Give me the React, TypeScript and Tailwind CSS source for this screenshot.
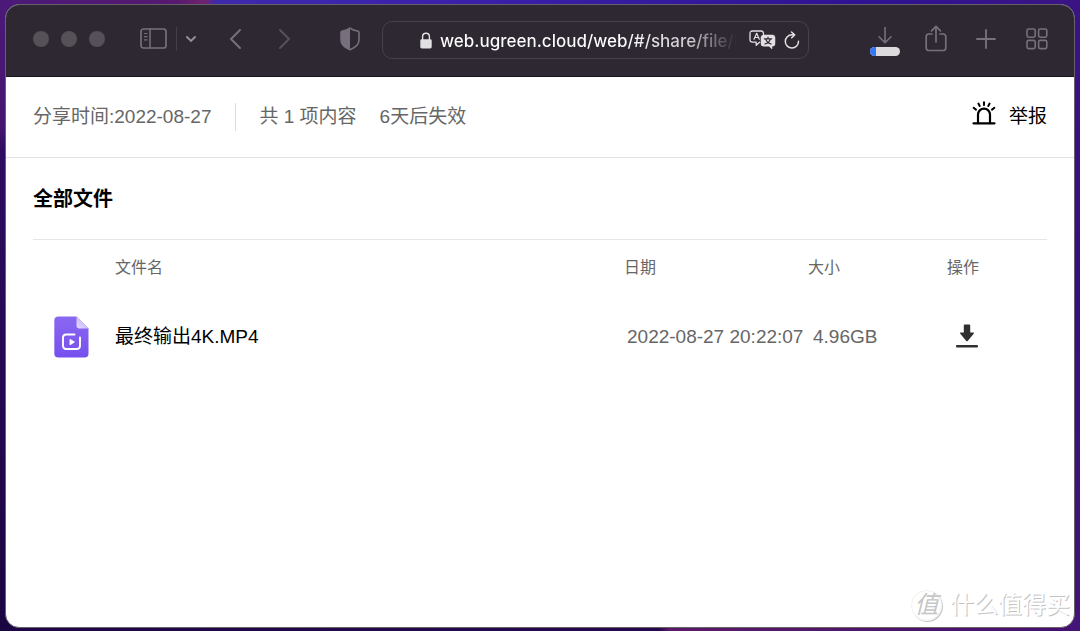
import React from 'react';

interface SharedFile {
  id: string;
  name: string;
  date: string;
  size: string;
}

const files: SharedFile[] = [{ id: '1', name: '最终输出4K.MP4', date: '2022-08-27 20:22:07', size: '4.96GB' }];

const SidebarIcon = () => (
  <svg className="w-7 h-[22px]" viewBox="0 0 28 22" fill="none" stroke="currentColor" strokeLinecap="round">
    <rect x="1" y="1" width="25" height="19" rx="2.5" strokeWidth="1.7" />
    <path d="M10 1v19" strokeWidth="1.5" />
    <path d="M4.5 5.5h2.5M4.5 8.7h2.5M4.5 11.9h2.5" strokeWidth="1.2" />
  </svg>
);

const ShieldIcon = () => (
  <svg className="w-5 h-6" viewBox="0 0 20 24">
    <path
      d="M10 1.2 Q13 3.4 18.2 4.3 Q19 4.5 19 5.4 V13 C19 17.5 15.5 20.5 10 22.8 C4.5 20.5 1 17.5 1 13 V5.4 Q1 4.5 1.8 4.3 Q7 3.4 10 1.2Z"
      fill="none"
      stroke="currentColor"
      strokeWidth="1.6"
    />
    <path d="M10 1.2 Q7 3.4 1.8 4.3 Q1 4.5 1 5.4 V13 C1 17.5 4.5 20.5 10 22.8Z" fill="currentColor" />
  </svg>
);

const LockIcon = () => (
  <svg className="w-3 h-[17px] shrink-0" viewBox="0 0 12 17">
    <path d="M2.6 8V4.6a3.4 3.4 0 0 1 6.8 0V8" fill="none" stroke="currentColor" strokeWidth="1.4" />
    <rect x="0.3" y="7.3" width="11.4" height="9.2" rx="1.4" fill="currentColor" />
  </svg>
);

const TranslateIcon = () => (
  <svg
    className="w-[27px] h-5"
    viewBox="0 0 27 20"
    fill="none"
    stroke="currentColor"
    strokeWidth="1.3"
    strokeLinecap="round"
    strokeLinejoin="round"
  >
    <path d="M10.5 12.2 7.2 15.2 V12.2 H3.5 Q1 12.2 1 9.7 V3.5 Q1 1 3.5 1 H12 Q14.5 1 14.5 3.5 V4.5" />
    <path d="M5 9.3 7.7 3.3 10.3 9.3M5.9 7.5h3.6" strokeWidth="1.2" />
    <path
      d="M14.5 5 H23.5 Q26 5 26 7.5 V13.7 Q26 16.2 23.5 16.2 H23 V19 L20 16.2 H14.5 Q12 16.2 12 13.7 V7.5 Q12 5 14.5 5Z"
      fill="currentColor"
      strokeWidth="0.5"
    />
    <path d="M15.3 8.8h7.4M19 7.2v1.6M21.4 8.8Q20.5 12.5 15.9 14M16.6 8.8Q17.7 12.5 22.2 14" stroke="#2e2833" strokeWidth="1.2" />
  </svg>
);

const ReloadIcon = () => (
  <svg
    className="w-4 h-[18px]"
    viewBox="0 0 16 18"
    fill="none"
    stroke="currentColor"
    strokeWidth="1.5"
    strokeLinecap="round"
    strokeLinejoin="round"
  >
    <path d="M14.5 10.2A6.6 6.6 0 1 1 8 3.8 H10.3" />
    <path d="M7.5 1 10.6 3.9 7.7 6.8" />
  </svg>
);

const ShareIcon = () => (
  <svg
    className="w-[22px] h-[27px]"
    viewBox="0 0 22 27"
    fill="none"
    stroke="currentColor"
    strokeWidth="1.7"
    strokeLinecap="round"
    strokeLinejoin="round"
  >
    <path d="M7 9H4Q1.2 9 1.2 11.8V22.7Q1.2 25.5 4 25.5H18Q20.8 25.5 20.8 22.7V11.8Q20.8 9 18 9H15" />
    <path d="M11 17V1.5M6.5 5.8 11 1.4 15.5 5.8" />
  </svg>
);

const GridIcon = () => (
  <svg className="w-[22px] h-[22px]" viewBox="0 0 22 22" fill="none" stroke="currentColor" strokeWidth="1.6">
    <rect x="1" y="1" width="8.2" height="8.2" rx="1.6" />
    <rect x="12.6" y="1" width="8.2" height="8.2" rx="1.6" />
    <rect x="1" y="12.4" width="8.2" height="8.2" rx="1.6" />
    <rect x="12.6" y="12.4" width="8.2" height="8.2" rx="1.6" />
  </svg>
);

const AlarmIcon = () => (
  <svg className="w-6 h-6" viewBox="0 0 24 24" fill="none" stroke="currentColor" strokeWidth="2.2" strokeLinecap="round">
    <path d="M1.5 22.3h21" />
    <path d="M6 22V13.6a6 6 0 0 1 12 0V22" />
    <path d="M12 1.2v2.8M6.4 2.6l1.3 2.4M17.6 2.6l-1.3 2.4M1.6 6.8l2.4 1.8M22.4 6.8l-2.4 1.8" strokeWidth="2" />
  </svg>
);

const VideoFileIcon = () => (
  <svg className="w-[35px] h-[42px]" viewBox="0 0 35 42">
    <defs>
      <linearGradient id="fileBody" x1="0" y1="0" x2="0" y2="1">
        <stop offset="0" stopColor="#8a68f0" />
        <stop offset="1" stopColor="#7650ee" />
      </linearGradient>
      <linearGradient id="fileFold" x1="0" y1="1" x2="1" y2="0">
        <stop offset="0" stopColor="#e6dcfd" />
        <stop offset="1" stopColor="#b9a2f6" />
      </linearGradient>
    </defs>
    <path d="M4.5 0.5H22.5L34.5 12.5V37.5Q34.5 41.5 30.5 41.5H4.5Q0.3 41.5 0.3 37.5V4.5Q0.3 0.5 4.5 0.5Z" fill="url(#fileBody)" />
    <path d="M22.5 0.5 34.5 12.5H25.5Q22.5 12.5 22.5 9.5Z" fill="url(#fileFold)" />
    <path
      d="M20.5 18.5H12.2Q9 18.5 9 21.7V29.8Q9 33 12.2 33H22.8Q26 33 26 29.8V21.5"
      fill="none"
      stroke="#fff"
      strokeWidth="1.9"
      strokeLinecap="round"
    />
    <path d="M16 23.4 20.4 26 16 28.8Z" fill="#fff" stroke="#fff" strokeWidth="1" strokeLinejoin="round" />
  </svg>
);

const DownloadIcon = () => (
  <svg className="w-[22px] h-6" viewBox="0 0 22 24" fill="#303030">
    <path d="M8.6 0.5H13.4Q14.2 0.5 14.2 1.3V8.5H17.2Q18.6 8.6 17.7 9.7L11.9 16.7Q11 17.7 10.1 16.7L4.3 9.7Q3.4 8.6 4.8 8.5H7.8V1.3Q7.8 0.5 8.6 0.5Z" />
    <rect x="0" y="21" width="22" height="2.4" rx="1" />
  </svg>
);

function Toolbar() {
  return (
    <header className="flex h-[72px] shrink-0 items-center border-b border-[#18131c] bg-[#2e2833] pl-[27px] pr-[26px] pb-[3px] text-[#77707c]">
      <div className="flex gap-3">
        <span className="h-4 w-4 rounded-full bg-[#565059]" />
        <span className="h-4 w-4 rounded-full bg-[#565059]" />
        <span className="h-4 w-4 rounded-full bg-[#565059]" />
      </div>
      <div className="ml-[35px] flex items-center gap-2">
        <button aria-label="Sidebar">
          <SidebarIcon />
        </button>
        <span className="h-6 w-px bg-[#453f4a]" />
        <button aria-label="Tab groups">
          <svg className="h-2 w-3" viewBox="0 0 12 8" fill="none" stroke="#96909b" strokeWidth="1.9" strokeLinecap="round">
            <path d="M2 2 6 6 10 2" />
          </svg>
        </button>
      </div>
      <div className="ml-[31px] flex items-center gap-9">
        <button aria-label="Back">
          <svg className="h-[22px] w-[14px]" viewBox="0 0 14 22" fill="none" stroke="currentColor" strokeWidth="2" strokeLinecap="round">
            <path d="M12 2 3 11 12 20" />
          </svg>
        </button>
        <button aria-label="Forward" className="text-[#57505c]">
          <svg className="h-[22px] w-[14px]" viewBox="0 0 14 22" fill="none" stroke="currentColor" strokeWidth="2" strokeLinecap="round">
            <path d="M2 2 11 11 2 20" />
          </svg>
        </button>
      </div>
      <button aria-label="Privacy report" className="ml-12">
        <ShieldIcon />
      </button>
      <div className="ml-[22px] mt-[2px] flex h-[38px] min-w-0 flex-1 items-center rounded-[10px] border border-[#48424d] pl-[37px] pr-2 text-[#e2e0e3]">
        <LockIcon />
        <input
          aria-label="Address"
          className="ml-2 min-w-0 flex-1 bg-transparent bg-gradient-to-r from-white from-60% via-[#c9c7cb] via-85% to-[#2e2833] bg-clip-text pt-[3px] font-[Inter,sans-serif] text-[17px] font-medium text-transparent outline-none"
          defaultValue="web.ugreen.cloud/web/#/share/file/h"
        />
        <div className="ml-3 flex items-center gap-2 pb-px">
          <button aria-label="Translate">
            <TranslateIcon />
          </button>
          <button aria-label="Reload">
            <ReloadIcon />
          </button>
        </div>
      </div>
      <div className="ml-[61px] flex items-center">
        <button aria-label="Downloads" className="flex flex-col items-center gap-[3px] pt-[3px]">
          <svg className="h-[18px] w-4" viewBox="0 0 16 18" fill="none" stroke="currentColor" strokeWidth="1.6" strokeLinecap="round">
            <path d="M8 1.5V16.5M2 10.8 8 16.7 14 10.8" />
          </svg>
          <span className="flex h-[9px] w-[30px] overflow-hidden rounded-full bg-[#dcdadd]">
            <span className="w-[6px] bg-[#3478f6]" />
          </span>
        </button>
        <button aria-label="Share" className="ml-[25px] pb-[2px]">
          <ShareIcon />
        </button>
        <button aria-label="New tab" className="ml-[29px]">
          <svg className="h-5 w-5" viewBox="0 0 20 20" fill="none" stroke="currentColor" strokeWidth="1.9" strokeLinecap="round">
            <path d="M10 1v18M1 10h18" />
          </svg>
        </button>
        <button aria-label="Tab overview" className="ml-[30px]">
          <GridIcon />
        </button>
      </div>
    </header>
  );
}

function ShareInfo() {
  return (
    <div className="flex h-[81px] items-center border-b border-[#e3e3e3] px-[27px] text-[19px] text-[#666]">
      <span>分享时间:2022-08-27</span>
      <span className="ml-6 h-7 w-px bg-[#dedede]" />
      <span className="ml-[23px]">共 1 项内容</span>
      <span className="ml-[23px]">6天后失效</span>
      <button className="ml-auto flex items-center gap-[13px] text-black">
        <span className="pb-2">
          <AlarmIcon />
        </span>
        <span>举报</span>
      </button>
    </div>
  );
}

function FileTable() {
  return (
    <table className="w-full table-fixed border-t border-[#e6e6e6] text-left text-[#666]">
      <colgroup>
        <col className="w-[82px]" />
        <col />
        <col className="w-[184px]" />
        <col className="w-[139px]" />
        <col className="w-[100px]" />
      </colgroup>
      <thead>
        <tr className="h-[57px] text-base">
          <th />
          <th className="font-normal">文件名</th>
          <th className="font-normal">日期</th>
          <th className="font-normal">大小</th>
          <th className="font-normal">操作</th>
        </tr>
      </thead>
      <tbody>
        {files.map((file) => (
          <tr key={file.id} className="h-[82px] text-[19px]">
            <td className="pb-[2px] pl-[21px]">
              <VideoFileIcon />
            </td>
            <td className="text-black">{file.name}</td>
            <td className="whitespace-nowrap pl-[3px]">{file.date}</td>
            <td className="pl-[5px]">{file.size}</td>
            <td className="pb-1 pl-[9px]">
              <button aria-label={`下载 ${file.name}`} className="block">
                <DownloadIcon />
              </button>
            </td>
          </tr>
        ))}
      </tbody>
    </table>
  );
}

function Watermark() {
  return (
    <div className="pointer-events-none absolute bottom-1 right-1 flex items-center gap-2 pb-[2px] text-white [text-shadow:1px_1px_0_#c4c4c4]">
      <span className="flex h-[31px] w-[31px] items-center justify-center rounded-full border border-[#f0f0f0] text-2xl leading-none text-[#c6c6c6] shadow-[1px_1px_0_#c8c8c8] [text-shadow:none]">
        <span className="italic">值</span>
      </span>
      <span className="text-2xl">什么值得买</span>
    </div>
  );
}

function App() {
  return (
    <div className="flex min-h-screen flex-col bg-[linear-gradient(90deg,#1e0746_0%,#26084f_61%,#5a1a66_62%,#451070_100%)] font-['Liberation_Sans','Noto_Sans_CJK_SC',sans-serif]">
      <div className="flex flex-1 flex-col bg-[linear-gradient(90deg,#4b1978_0%,#55196f_16%,#70246e_19%,#3d2aad_20%,#3a20a8_45%,#2e1292_80%,#3a1482_100%),linear-gradient(180deg,#4b1978_0%,#451670_20%,#2e0c60_24%,#1a0640_100%),linear-gradient(180deg,#3a1482_0%,#34107c_50%,#451478_100%)] bg-[length:100%_10px,10px_100%,10px_100%] bg-[position:top,left,right] bg-no-repeat px-[5px] pb-[3px] pt-1">
        <div className="relative flex flex-1 flex-col overflow-hidden rounded-[14px] border border-[#67616c] bg-white">
          <Toolbar />
          <main>
            <ShareInfo />
            <section className="px-[27px]">
              <h1 className="flex h-[81px] items-center text-xl font-bold text-black">全部文件</h1>
              <FileTable />
            </section>
          </main>
          <Watermark />
        </div>
      </div>
    </div>
  );
}

export default App;
